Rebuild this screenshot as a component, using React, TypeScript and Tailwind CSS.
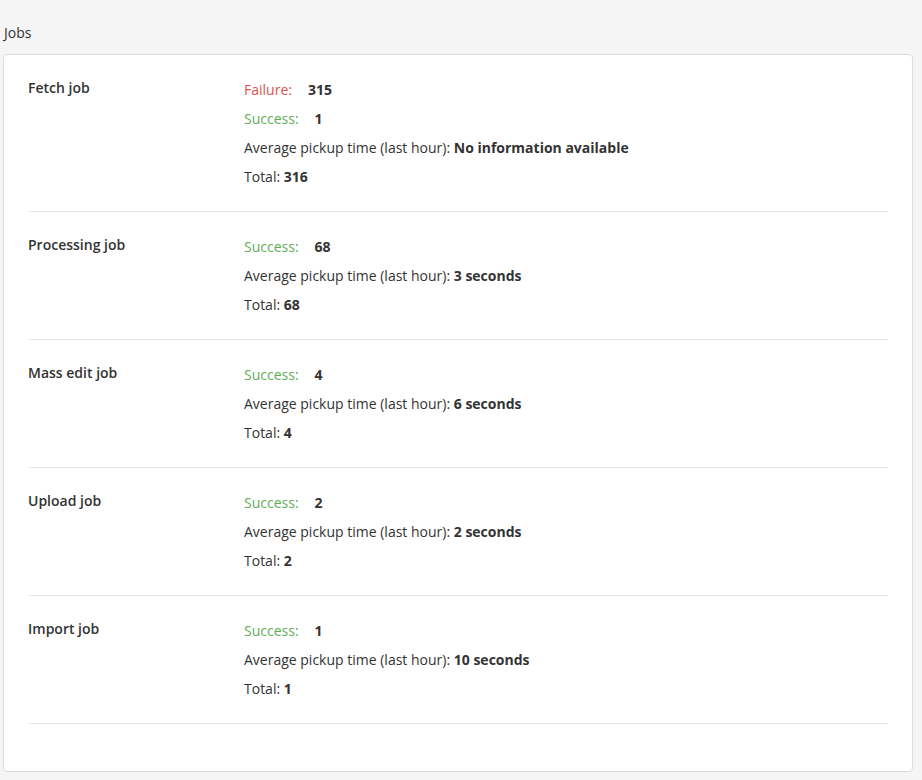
const JOBS = [
  {
    name: "Fetch job",
    failure: 315,
    success: 1,
    pickup: "No information available",
    total: 316,
  },
  { name: "Processing job", success: 68, pickup: "3 seconds", total: 68 },
  { name: "Mass edit job", success: 4, pickup: "6 seconds", total: 4 },
  { name: "Upload job", success: 2, pickup: "2 seconds", total: 2 },
  { name: "Import job", success: 1, pickup: "10 seconds", total: 1 },
];

interface Job {
  name: string;
  failure?: number;
  success: number;
  pickup: string;
  total: number;
}

function JobRow({ job }: { job: Job }) {
  return (
    <div className="flex border-b border-[#e8e8e8] py-5 leading-[29px]">
      <div className="w-[216px] shrink-0 font-semibold leading-[25px] text-[#333]">{job.name}</div>
      <div className="flex flex-col">
        {job.failure !== undefined && (
          <div>
            <span className="text-[#d9534f]">Failure:</span>
            <span className="ml-4 font-bold">{job.failure}</span>
          </div>
        )}
        <div>
          <span className="text-[#5fae5a]">Success:</span>
          <span className="ml-4 font-bold">{job.success}</span>
        </div>
        <div>
          Average pickup time (last hour): <span className="font-bold">{job.pickup}</span>
        </div>
        <div>
          Total: <span className="font-bold">{job.total}</span>
        </div>
      </div>
    </div>
  );
}

export default function App() {
  return (
    <div
      className="min-h-[780px] bg-[#f5f5f5] pt-[23px] text-[14px] text-[#333]"
      style={{ fontFamily: '"Open Sans", "Liberation Sans", sans-serif' }}
    >
      <div className="pl-1 leading-5">Jobs</div>
      <div className="ml-[3px] mt-[11px] w-[910px] rounded border border-[#dcdcdc] bg-white px-6 pb-[47px]">
        {JOBS.map((job) => (
          <JobRow key={job.name} job={job} />
        ))}
      </div>
    </div>
  );
}
